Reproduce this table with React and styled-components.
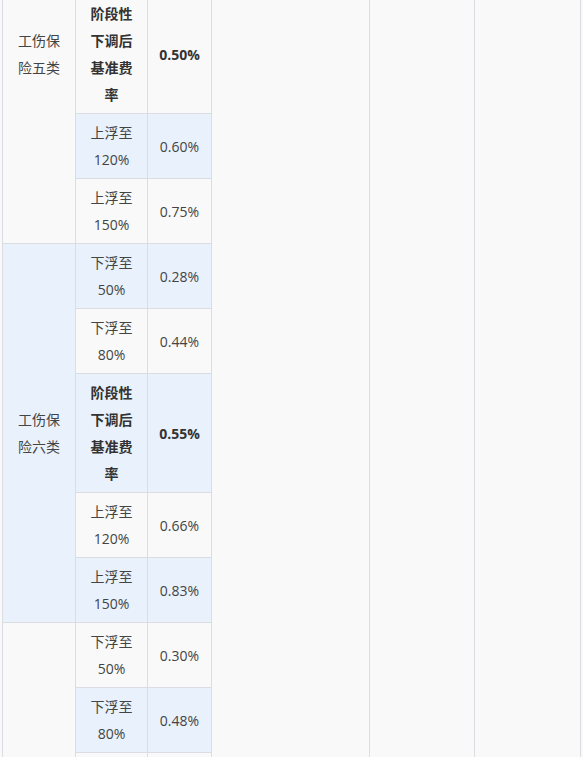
import React from 'react';
import styled, { createGlobalStyle } from 'styled-components';

const GlobalStyle = createGlobalStyle`
  html, body {
    margin: 0;
    padding: 0;
    background: #f9f9f9;
  }
`;

const Viewport = styled.div`
  height: 757px;
  overflow: hidden;
  padding-left: 2px;
  font-family: "Open Sans", "Noto Sans CJK SC", sans-serif;
`;

const RateTable = styled.table`
  margin-top: -136px;
  width: 578px;
  table-layout: fixed;
  border-collapse: collapse;
  font-size: 14px;
  color: #444;

  tr:nth-child(odd) td {
    background: #f9f9f9;
  }
  tr:nth-child(even) td {
    background: #e9f1fc;
  }
`;

const Col = styled.col`
  width: ${(p) => p.$w}px;
`;

const Cell = styled.td`
  border: 1px solid #dadde1;
  padding: 5px 10px;
  line-height: 27px;
  text-align: center;
  vertical-align: middle;
  font-weight: ${(p) => (p.$bold ? 700 : 400)};
  color: ${(p) => (p.$bold ? '#333' : '#444')};
`;

const Blank = styled.td`
  border: 1px solid #dadde1;
  background: #f9f9f9 !important;
`;

const widths = [73, 72, 64, 158, 105, 106];

const levels = [
  { label: '下浮至50%', factor: 0.5 },
  { label: '下浮至80%', factor: 0.8 },
  { label: '阶段性下调后基准费率', factor: 1, base: true },
  { label: '上浮至120%', factor: 1.2 },
  { label: '上浮至150%', factor: 1.5 },
];

const groups = [
  { name: '工伤保险五类', base: 0.5 },
  { name: '工伤保险六类', base: 0.55 },
  { name: '工伤保险七类', base: 0.6 },
];

const fmt = (v) => (Math.round(v * 100 + 1e-9) / 100).toFixed(2) + '%';

const rows = [];
groups.forEach((g, gi) => {
  levels.forEach((lv, li) => {
    rows.push({ group: g, level: lv, first: li === 0, firstOfAll: gi === 0 && li === 0 });
  });
});

export default function App() {
  return (
    <>
      <GlobalStyle />
      <Viewport>
        <RateTable>
          <colgroup>
            {widths.map((w, i) => (
              <Col key={i} $w={w} />
            ))}
          </colgroup>
          <tbody>
            {rows.map((r, i) => (
              <tr key={i}>
                {r.first && <Cell rowSpan={levels.length}>{r.group.name}</Cell>}
                <Cell $bold={r.level.base}>{r.level.label}</Cell>
                <Cell $bold={r.level.base}>{fmt(r.group.base * r.level.factor)}</Cell>
                {r.firstOfAll && (
                  <>
                    <Blank rowSpan={rows.length} />
                    <Blank rowSpan={rows.length} />
                    <Blank rowSpan={rows.length} />
                  </>
                )}
              </tr>
            ))}
          </tbody>
        </RateTable>
      </Viewport>
    </>
  );
}
